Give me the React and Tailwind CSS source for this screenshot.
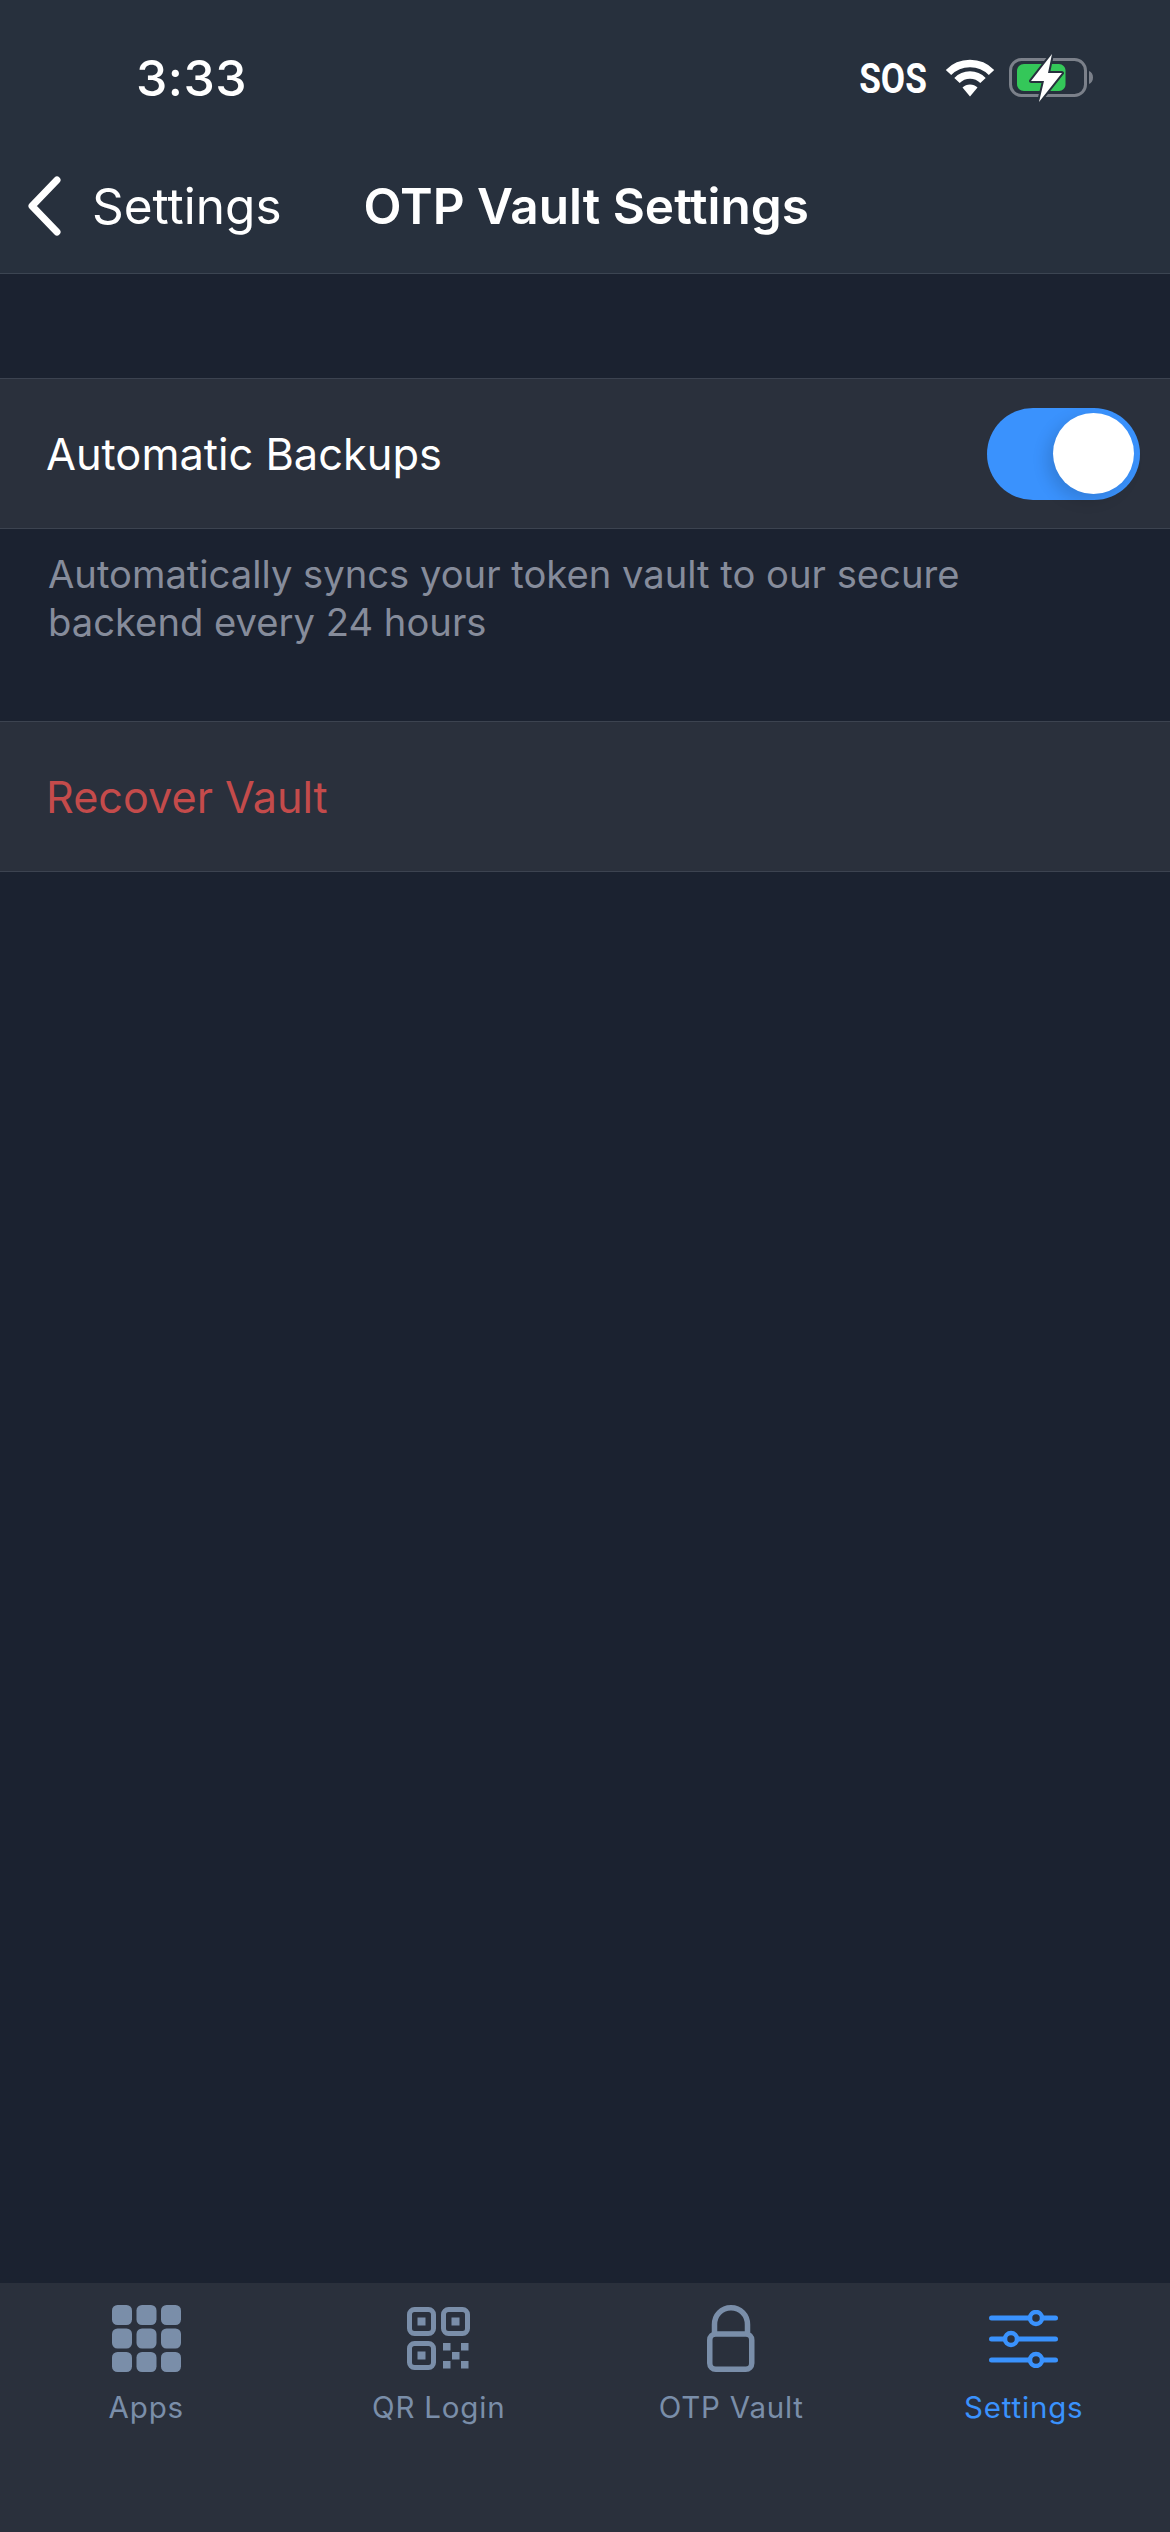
const INTER = "font-['Inter','Noto_Sans',sans-serif]";

function Wifi() {
  return (
    <svg width="50" height="38" viewBox="0 0 50 38" fill="none" className="block">
      <path d="M3.5 13.5C9 7.8 16.6 4.5 25 4.5s16 3.3 21.5 9" stroke="#fff" strokeWidth="7.5" strokeLinecap="butt" />
      <path d="M12 21.5C15.4 18 20 16 25 16s9.6 2 13 5.5" stroke="#fff" strokeWidth="7.5" strokeLinecap="butt" />
      <path d="M17.5 28.5C19.5 26.6 22.1 25.5 25 25.5s5.5 1.1 7.5 3L25 37.5z" fill="#fff" />
    </svg>
  );
}

function Battery() {
  return (
    <svg width="84" height="48" viewBox="0 0 84 48" fill="none" className="block">
      <rect x="1.5" y="5.5" width="75" height="36" rx="11" stroke="#7b808a" strokeWidth="3" />
      <path d="M80 17c2.6 1 4 3.4 4 6.5s-1.400 5.500-4 6.500z" fill="#7b808a" />
      <path d="M15 10h35c3.500 0 6.500 3 6.500 6.500v14c0 3.500-3 6.500-6.500 6.500H15c-4 0-7-3-7-7V17c0-4 3-7 7-7z" fill="#34c759" />
      <path d="M43 0 22 27h13l-5 21 23-29H39z" fill="#fff" stroke="#27303d" strokeWidth="4" strokeLinejoin="round" paintOrder="stroke" />
    </svg>
  );
}

function AppsIcon() {
  return (
    <svg width="69" height="67" viewBox="0 0 69 67" fill="#7a8ea9" className="block">
      {[0, 24.500, 49].map((x) =>
        [0, 23.500, 47].map((y) => <rect key={`${x}-${y}`} x={x} y={y} width="20" height="20" rx="5.500" />)
      )}
    </svg>
  );
}

function QrIcon() {
  const finder = [
    [0, 0],
    [34, 0],
    [0, 34],
  ];
  const bits = [
    [36, 36],
    [54, 36],
    [45, 45],
    [36, 54],
    [54, 54],
  ];
  return (
    <svg width="63" height="63" viewBox="0 0 63 63" fill="#7a8ea9" className="block">
      {finder.map(([x, y]) => (
        <g key={`${x}-${y}`}>
          <rect x={x + 2.500} y={y + 2.500} width="24" height="24" rx="5" fill="none" stroke="#7a8ea9" strokeWidth="5" />
          <rect x={x + 10.500} y={y + 10.500} width="8" height="8" />
        </g>
      ))}
      {bits.map(([x, y]) => (
        <rect key={`${x}-${y}`} x={x} y={y} width="7.500" height="7.500" />
      ))}
    </svg>
  );
}

function LockIcon() {
  return (
    <svg width="48" height="67" viewBox="0 0 48 67" fill="none" stroke="#7a8ea9" strokeWidth="5.500" className="block">
      <rect x="2.750" y="29" width="42" height="35.250" rx="6" />
      <path d="M7.500 29V19.500C7.500 10 14.500 2.750 24 2.750S40.500 10 40.500 19.500V29" />
    </svg>
  );
}

function SlidersIcon() {
  const rows = [
    [8, 47],
    [29, 22],
    [50, 47],
  ];
  return (
    <svg width="69" height="58" viewBox="0 0 69 58" fill="none" className="block">
      {rows.map(([y, x]) => (
        <g key={y}>
          <line x1="2.500" y1={y} x2="66.500" y2={y} stroke="#3a92fd" strokeWidth="5" strokeLinecap="round" />
          <circle cx={x} cy={y} r="6" fill="#2a303c" stroke="#3a92fd" strokeWidth="4.500" />
        </g>
      ))}
    </svg>
  );
}

function Tab({ icon, label, active }) {
  return (
    <div className="flex flex-col items-center">
      <div className="h-[67px] flex items-center justify-center">{icon}</div>
      <span className={`mt-[17px] text-[29.500px] leading-[36px] tracking-[0.8px] ${active ? "text-[#3a92fd]" : "text-[#7a8ea9]"}`}>
        {label}
      </span>
    </div>
  );
}

export default function App() {
  return (
    <div className={`${INTER} w-[1170px] h-[2532px] flex flex-col bg-[#1b2230] overflow-hidden`}>
      <header className="bg-[#27303d] border-b border-[#3c4552] h-[274px] shrink-0 text-white">
        <div className="h-[156px] flex items-center">
          <span className="ml-[136px] text-[50px] leading-none font-medium tracking-[0.5px]">3:33</span>
          <div className="ml-auto mr-[77px] flex items-center">
            <span className="text-[43px] leading-none font-['Roboto',sans-serif] font-bold w-[66px] flex justify-center scale-x-[0.82]">SOS</span>
            <div className="ml-[19px]"><Wifi /></div>
            <div className="ml-[14px]"><Battery /></div>
          </div>
        </div>
        <div className="h-[100px] flex items-center">
          <svg width="38" height="60" viewBox="0 0 38 60" fill="none" className="ml-[25px] block">
            <path d="M32 4 7 30l25 26" stroke="#fff" strokeWidth="7" strokeLinecap="round" strokeLinejoin="round" />
          </svg>
          <span className="ml-[29px] pt-[2px] text-[49.500px] leading-none">Settings</span>
          <span className="ml-[82px] pt-[2px] text-[49.500px] leading-none font-semibold">OTP Vault Settings</span>
        </div>
      </header>

      <main className="flex-1 pt-[104px]">
        <div className="h-[151px] bg-[#2a303c] border-y border-[#3c4350] flex items-center justify-between pl-[46px] pr-[30px]">
          <span className="text-white pt-[2px] text-[43.400px] leading-none">Automatic Backups</span>
          <div className="w-[153px] h-[92px] rounded-full bg-[#3a92fd] flex items-center justify-end pr-[6px]">
            <div className="w-[81px] h-[81px] rounded-full bg-white shadow-[-6px_6px_16px_rgba(0,0,0,0.14)]" />
          </div>
        </div>
        <p className="pl-[48px] pr-[180px] pt-[21px] text-[#868c9b] text-[38.200px] leading-[48px] h-[192px]">
          Automatically syncs your token vault to our secure backend every 24 hours
        </p>
        <div className="h-[151px] bg-[#2a303c] border-y border-[#3c4350] flex items-center pl-[46px]">
          <span className="text-[#c44b4b] pt-[2px] text-[43.200px] leading-none">Recover Vault</span>
        </div>
      </main>

      <nav className="h-[249px] shrink-0 bg-[#2a303c] grid grid-cols-4 pt-[22px] content-start">
        <Tab icon={<AppsIcon />} label="Apps" />
        <Tab icon={<QrIcon />} label="QR Login" />
        <Tab icon={<LockIcon />} label="OTP Vault" />
        <Tab icon={<SlidersIcon />} label="Settings" active />
      </nav>
    </div>
  );
}
